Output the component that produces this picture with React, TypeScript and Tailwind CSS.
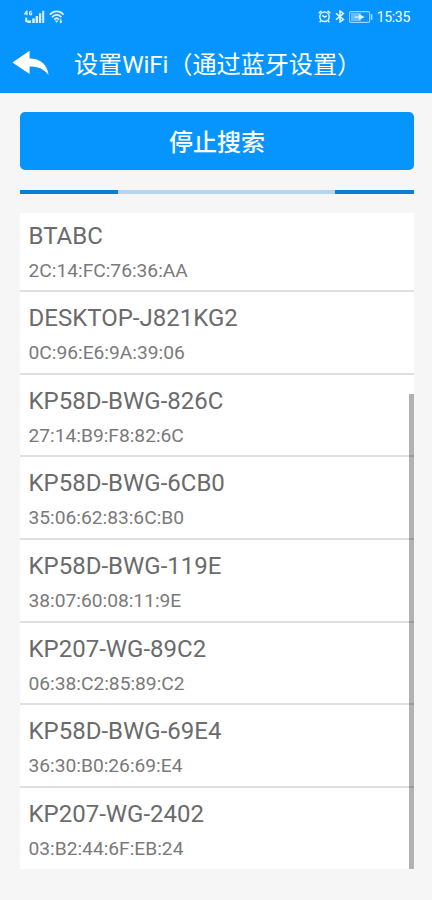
const devices = [
  { name: "BTABC", address: "2C:14:FC:76:36:AA" },
  { name: "DESKTOP-J821KG2", address: "0C:96:E6:9A:39:06" },
  { name: "KP58D-BWG-826C", address: "27:14:B9:F8:82:6C" },
  { name: "KP58D-BWG-6CB0", address: "35:06:62:83:6C:B0" },
  { name: "KP58D-BWG-119E", address: "38:07:60:08:11:9E" },
  { name: "KP207-WG-89C2", address: "06:38:C2:85:89:C2" },
  { name: "KP58D-BWG-69E4", address: "36:30:B0:26:69:E4" },
  { name: "KP207-WG-2402", address: "03:B2:44:6F:EB:24" },
];

function SignalIcon() {
  return (
    <svg width="21" height="14" viewBox="0 0 21 14" fill="#fff" opacity="0.85">
      <path
        d="M2.6 .8 .8 3.8h2.8M3 .8v4.4M7.6 1.4C5.4 .4 4.8 4.8 6.6 4.9 7.8 4.9 7.6 3.2 7.6 3.2H6.6"
        fill="none"
        stroke="#fff"
        strokeWidth="1.2"
      />
      <rect x="1.2" y="7.6" width="2" height="4.4" />
      <rect x="3.2" y="10.4" width="3.8" height="2.6" />
      <rect x="8.2" y="8.4" width="2.6" height="4.6" />
      <rect x="11.6" y="6" width="2.5" height="7" />
      <rect x="15" y="3.2" width="2.2" height="9.8" />
      <rect x="18.2" y=".8" width="2" height="12.2" />
    </svg>
  );
}

function WifiIcon() {
  return (
    <svg width="16" height="14" viewBox="0 0 16 14" fill="none" stroke="#fff" strokeWidth="1.7" opacity="0.85">
      <path d="M.8 4.6C4.8 .4 10.6 .4 14.6 4.6" />
      <path d="M3 7.1C5.8 4.2 9.6 4.2 12.4 7.1" />
      <path d="M5.2 9.5C6.8 7.9 8.6 7.9 10.2 9.5" />
      <path d="M5.8 10.4 7.7 12.8 9.6 10.4z" fill="#fff" stroke="none" />
      <path d="M11.8 8.8v3.8M10.8 11.4l1 1.2 1-1.2" strokeWidth="1.1" />
    </svg>
  );
}

function AlarmIcon() {
  return (
    <svg width="13" height="13" viewBox="0 0 13 13" fill="none" stroke="#fff" strokeWidth="1.5" opacity="0.9">
      <circle cx="6.5" cy="6.8" r="4.7" />
      <path d="M.7 3.2 3.4 .9M12.3 3.2 9.6 .9M2.9 10.6 1.6 12.2M10.1 10.6l1.3 1.6M4.2 5.4l2.5 1.8 2-1.4" />
    </svg>
  );
}

function BluetoothIcon() {
  return (
    <svg width="10" height="13" viewBox="0 0 10 13" fill="none" stroke="#fff" strokeWidth="1.5" opacity="0.9">
      <path d="M1 3.4 8.4 9.4 5 12V1l3.4 2.6L1 9.6" />
    </svg>
  );
}

function BatteryIcon() {
  return (
    <svg width="24" height="12" viewBox="0 0 24 12" opacity="0.85">
      <rect x=".6" y=".6" width="20" height="10.8" rx="1.2" fill="none" stroke="#fff" strokeWidth="1.1" opacity="0.7" />
      <rect x="2" y="2" width="10" height="8" fill="#fff" opacity="0.45" />
      <path d="M5.6 5.4h4.2V2.8L15.6 6 9.8 9.2V6.8H5.6z" fill="#fff" />
      <rect x="21.8" y="3.2" width="1.6" height="5.6" fill="#fff" opacity="0.8" />
    </svg>
  );
}

function BackIcon() {
  return (
    <svg width="37" height="26" viewBox="0 0 37 26" fill="#fff">
      <path d="M.4 12.6 17.6 .8V8.6C28.4 8.8 35 14 36.6 25 31.4 18.6 26 16.6 17.6 16.6V24z" />
    </svg>
  );
}

function StatusBar() {
  return (
    <div className="flex h-[33px] items-center justify-between pr-[22px] pl-6 text-white">
      <div className="flex items-center gap-1">
        <SignalIcon />
        <WifiIcon />
      </div>
      <div className="flex items-center gap-1">
        <AlarmIcon />
        <BluetoothIcon />
        <BatteryIcon />
        <span className="text-[14px] leading-none tracking-[-0.3px]">15:35</span>
      </div>
    </div>
  );
}

function DeviceRow({ device }: { device: (typeof devices)[0] }) {
  return (
    <li className="h-[82.6px] shrink-0 border-b-2 border-[#dfdfdf] pt-3 pl-[8.5px] text-[#6b6b6b] last:h-[81.2px] last:border-b-0">
      <p className="text-[24px] leading-[28px]">{device.name}</p>
      <p className="mt-[10px] text-[19.2px] leading-[22px] text-[#7a7a7a]">{device.address}</p>
    </li>
  );
}

export default function App() {
  return (
    <div className="h-[900px] w-[432px] overflow-hidden bg-[#f6f6f6] font-[Roboto,'Noto_Sans_CJK_SC',sans-serif]">
      <header className="h-[93px] bg-[#0695ff]">
        <StatusBar />
        <div className="flex h-[60px] items-center pl-3 text-white">
          <BackIcon />
          <h1 className="mt-1 ml-[25px] text-[24.2px] leading-none tracking-[-0.1px] whitespace-nowrap">
            设置WiFi（通过蓝牙设置）
          </h1>
        </div>
      </header>

      <main className="flex flex-col pt-[19px] pr-[18px] pl-5">
        <button className="h-[58px] rounded-[5px] bg-[#0695ff] pt-1 text-[24px] font-medium text-white">停止搜索</button>

        {/* Indeterminate search progress */}
        <div className="mt-5 flex h-1 justify-between bg-[#b5d6ee]">
          <div className="w-[98px] bg-[#0a7dd4]" />
          <div className="w-[79px] bg-[#0a7dd4]" />
        </div>

        <div className="relative mt-[19px] h-[656px] overflow-hidden bg-white">
          {/* List is scrolled to its end, so the first row is cut at the top */}
          <ul className="flex h-full flex-col justify-end">
            {devices.map((device) => (
              <DeviceRow key={device.address} device={device} />
            ))}
          </ul>
          <div className="absolute right-0 bottom-0 h-[475px] w-[5px] bg-black/30" />
        </div>
      </main>
    </div>
  );
}
